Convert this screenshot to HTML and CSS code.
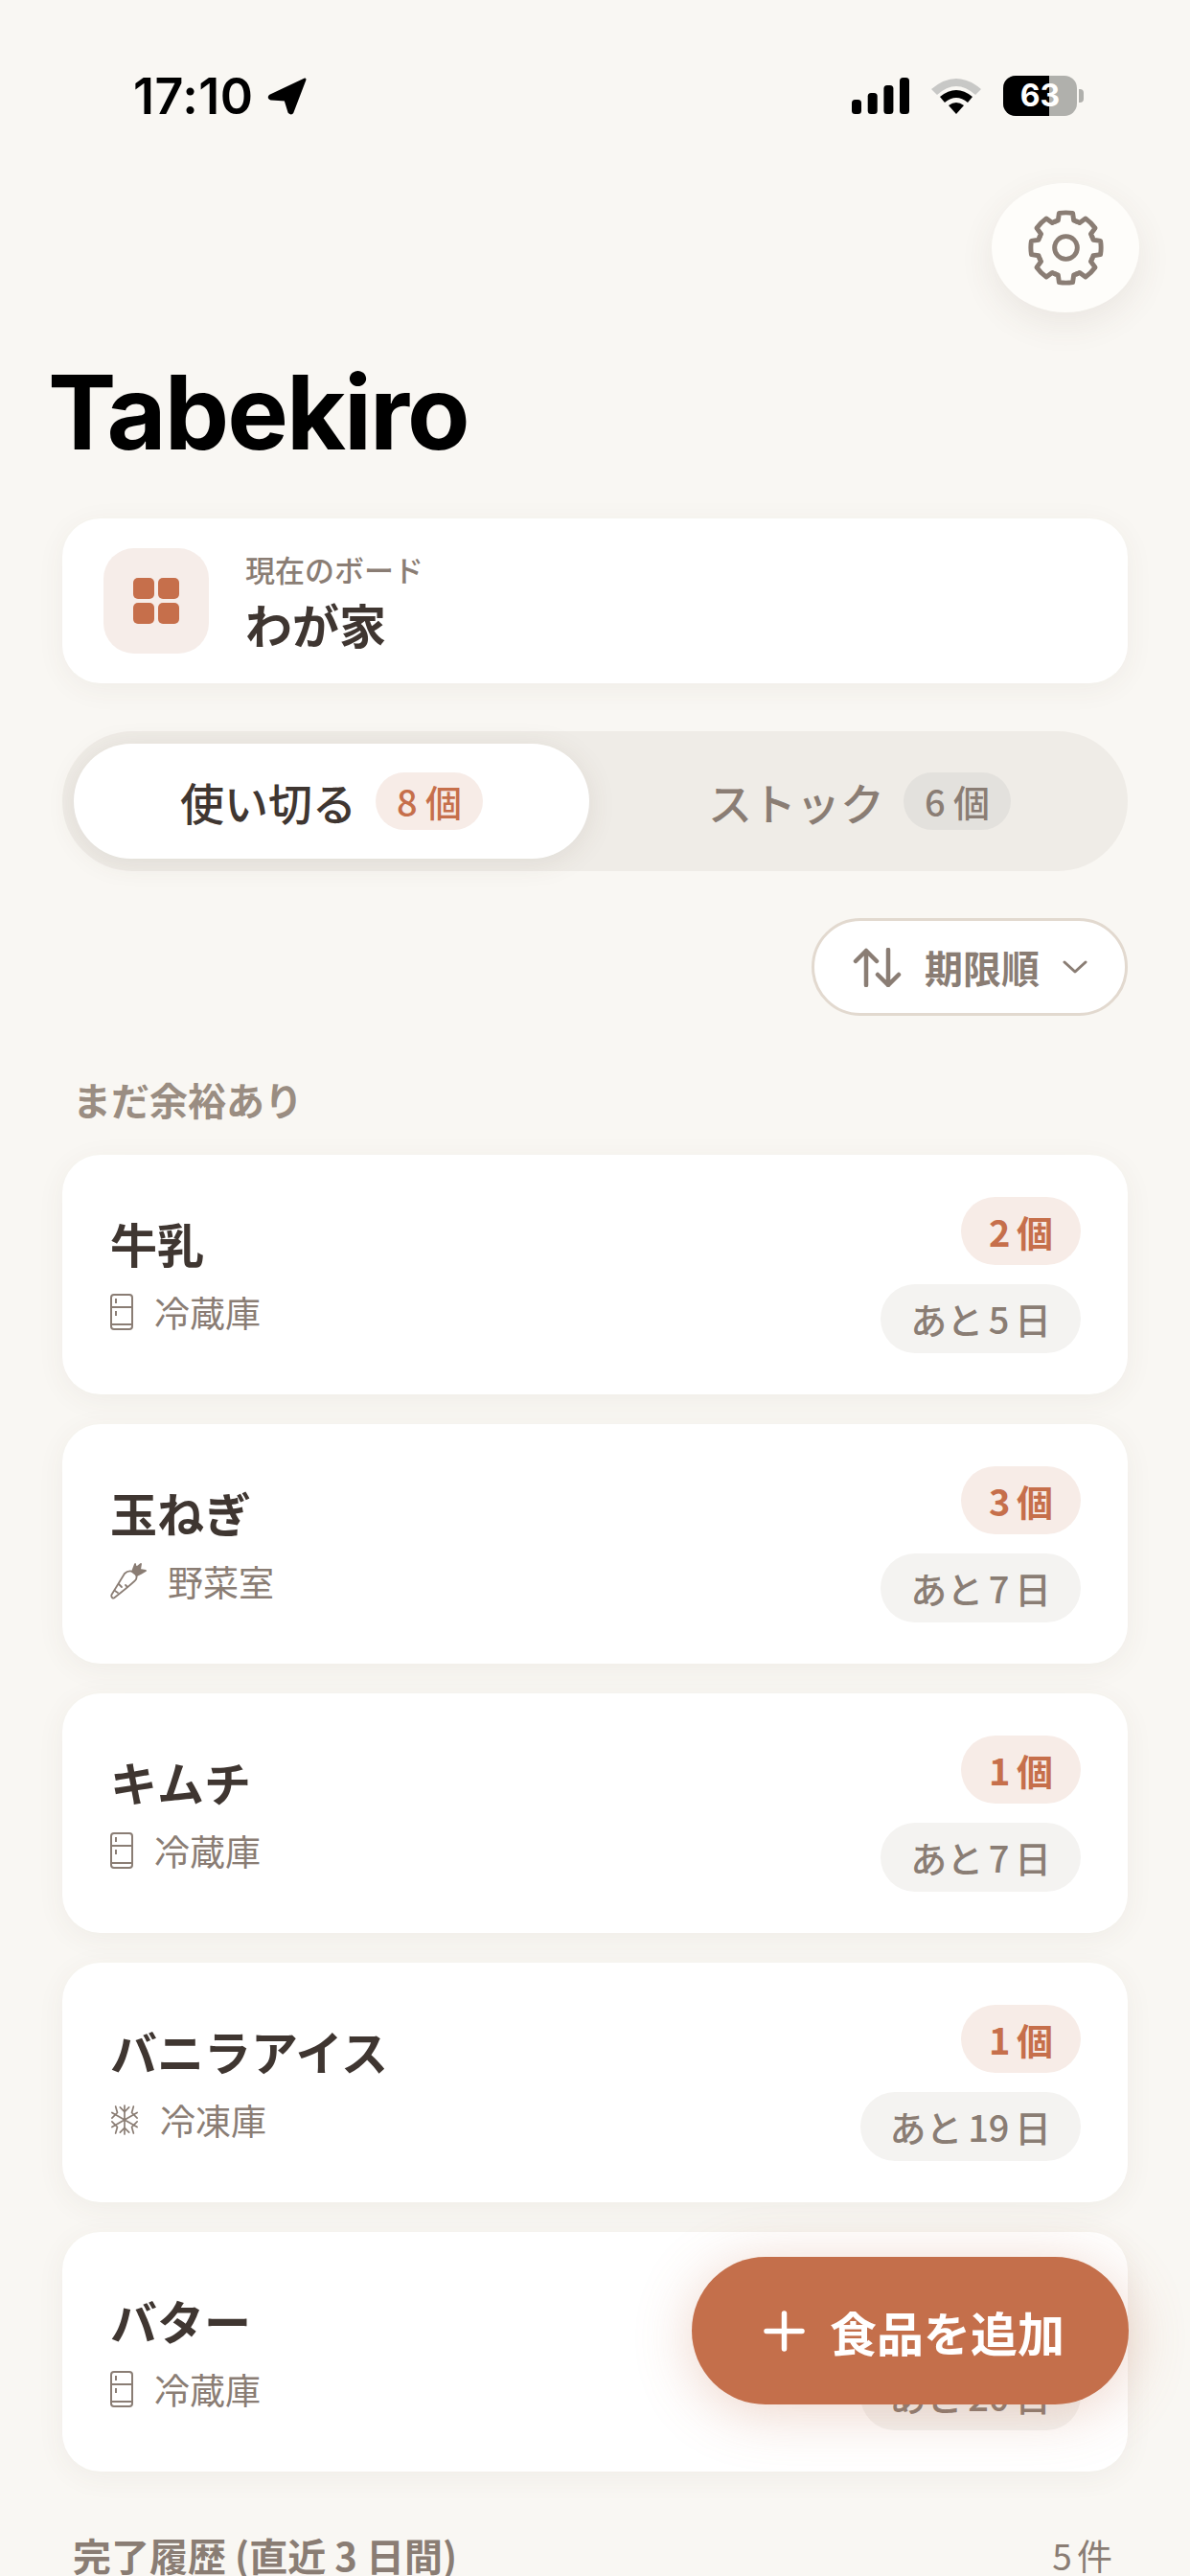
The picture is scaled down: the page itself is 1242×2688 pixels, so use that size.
FILE: index.html
```html
<!DOCTYPE html>
<html lang="ja">
<head>
    <meta charset="UTF-8">
    <title>Tabekiro</title>
    <link rel="stylesheet" href="styles.css">
</head>
<body>
    <div class="phone">
        <div class="status-bar">
            <div class="status-time">
                <span>17:10</span>
                <svg class="loc-icon" viewBox="0 0 41 39"><path d="M39 2 L3 19 Q1 21 4 22 L19 23 L23 36 Q25 38 26 36 Z" fill="#000" stroke="#000" stroke-width="3" stroke-linejoin="round"/></svg>
            </div>
            <div class="status-icons">
                <svg class="signal-icon" viewBox="0 0 60 38">
                    <rect x="0" y="23" width="10" height="15" rx="3.500"/>
                    <rect x="16.700" y="16" width="10" height="22" rx="3.500"/>
                    <rect x="33.400" y="8" width="10" height="30" rx="3.500"/>
                    <rect x="50" y="0" width="10" height="38" rx="3.500"/>
                </svg>
                <svg class="wifi-icon" viewBox="0 0 52 37">
                    <path d="M26 37 L18 28 Q26 22 34 28 Z" fill="#000"/>
                    <path d="M9 19 Q26 5 43 19 L38 25 Q26 15 14 25 Z" fill="#000"/>
                    <path d="M0 11 Q26 -11 52 11 L46 17 Q26 -1 6 17 Z" fill="#c8c8c6"/>
                </svg>
                <div class="battery">
                    <div class="battery-fill"></div>
                    <span class="battery-num">63</span>
                    <div class="battery-cap"></div>
                </div>
            </div>
        </div>

        <div class="top-row">
            <button class="settings-btn">
                <svg viewBox="0 0 80 80" fill="none" stroke="#8a7d74" stroke-width="5" stroke-linecap="round" stroke-linejoin="round">
                    <defs>
                        <path id="gear-tooth" d="M28.500 12.300 Q30 11.600 31.700 11.200 L32.800 3.500 Q40 2.300 47.200 3.500 L48.300 11.200 Q50 11.600 51.500 12.300"/>
                    </defs>
                    <use href="#gear-tooth"/>
                    <use href="#gear-tooth" transform="rotate(45 40 40)"/>
                    <use href="#gear-tooth" transform="rotate(90 40 40)"/>
                    <use href="#gear-tooth" transform="rotate(135 40 40)"/>
                    <use href="#gear-tooth" transform="rotate(180 40 40)"/>
                    <use href="#gear-tooth" transform="rotate(225 40 40)"/>
                    <use href="#gear-tooth" transform="rotate(270 40 40)"/>
                    <use href="#gear-tooth" transform="rotate(315 40 40)"/>
                    <circle cx="40" cy="40" r="12"/>
                </svg>
            </button>
        </div>

        <h1 class="app-title">Tabekiro</h1>

        <main class="content">
            <section class="board-card">
                <div class="board-icon">
                    <svg viewBox="0 0 48 48"><rect x="0" y="0" width="22" height="22" rx="5"/><rect x="26" y="0" width="22" height="22" rx="5"/><rect x="0" y="26" width="22" height="22" rx="5"/><rect x="26" y="26" width="22" height="22" rx="5"/></svg>
                </div>
                <div class="board-text">
                    <div class="board-label">現在のボード</div>
                    <div class="board-name">わが家</div>
                </div>
            </section>

            <div class="tabs">
                <div class="tab tab-active">使い切る <span class="tab-count">8 個</span></div>
                <div class="tab tab-stock">ストック <span class="tab-count">6 個</span></div>
            </div>

            <div class="sort-row">
                <button class="sort-btn">
                    <svg class="sort-icon" viewBox="0 0 51 41" fill="none" stroke="#8a7d74" stroke-width="4.500" stroke-linecap="round" stroke-linejoin="round"><path d="M14 39V3M3 14L14 3l11 11M37 2v37M26 28l11 11 11-11"/></svg>
                    <span>期限順</span>
                    <svg class="chev-icon" viewBox="0 0 26 14" fill="none" stroke="#8a7d74" stroke-width="3" stroke-linecap="round" stroke-linejoin="round"><path d="M2 2l11 10L24 2"/></svg>
                </button>
            </div>

            <h2 class="section-title">まだ余裕あり</h2>

            <div class="item-list">
                <article class="item">
                    <div class="item-main">
                        <div class="item-name">牛乳</div>
                        <div class="item-place">
                            <svg class="place-icon fridge" viewBox="0 0 24 38"><use href="#fridge"/></svg>
                            <span>冷蔵庫</span>
                        </div>
                    </div>
                    <div class="item-side">
                        <span class="qty">2 個</span>
                        <span class="left">あと 5 日</span>
                    </div>
                </article>
                <article class="item">
                    <div class="item-main">
                        <div class="item-name">玉ねぎ</div>
                        <div class="item-place">
                            <svg class="place-icon carrot" viewBox="0 0 38 38" fill="none" stroke="#8a7d74" stroke-width="1.800" stroke-linecap="round" stroke-linejoin="round">
                                <path d="M2 36 Q0.800 35 1.500 33 L15 11 Q19 7 24 9 Q29 12 27 17 Q25 20 4 36.500 Q3 37 2 36Z"/>
                                <path d="M9 22l3 3M5 29l3 2M18 25l-2-2"/>
                                <path d="M23 9L28 13 32 11 37 8 31 7 32 1 27 5 26 1Z" fill="#8a7d74"/>
                            </svg>
                            <span>野菜室</span>
                        </div>
                    </div>
                    <div class="item-side">
                        <span class="qty">3 個</span>
                        <span class="left">あと 7 日</span>
                    </div>
                </article>
                <article class="item">
                    <div class="item-main">
                        <div class="item-name">キムチ</div>
                        <div class="item-place">
                            <svg class="place-icon fridge" viewBox="0 0 24 38"><use href="#fridge"/></svg>
                            <span>冷蔵庫</span>
                        </div>
                    </div>
                    <div class="item-side">
                        <span class="qty">1 個</span>
                        <span class="left">あと 7 日</span>
                    </div>
                </article>
                <article class="item">
                    <div class="item-main">
                        <div class="item-name">バニラアイス</div>
                        <div class="item-place">
                            <svg class="place-icon snow" viewBox="0 0 32 34" fill="none" stroke="#8a7d74" stroke-width="1.800" stroke-linecap="round" stroke-linejoin="round">
                                <path d="M16 1v32M2 9l28 16M30 9L2 25"/>
                                <path d="M11 3l5 5 5-5M11 31l5-5 5 5M2 15l6-6-2-7M30 15l-6-6 2-7M2 19l6 6-2 7M30 19l-6 6 2 7"/>
                            </svg>
                            <span>冷凍庫</span>
                        </div>
                    </div>
                    <div class="item-side">
                        <span class="qty">1 個</span>
                        <span class="left">あと 19 日</span>
                    </div>
                </article>
                <article class="item">
                    <div class="item-main">
                        <div class="item-name">バター</div>
                        <div class="item-place">
                            <svg class="place-icon fridge" viewBox="0 0 24 38"><use href="#fridge"/></svg>
                            <span>冷蔵庫</span>
                        </div>
                    </div>
                    <div class="item-side">
                        <span class="qty">2 個</span>
                        <span class="left">あと 20 日</span>
                    </div>
                </article>
            </div>

            <div class="history-row">
                <h2 class="section-title history-title">完了履歴 (直近 3 日間)</h2>
                <span class="history-count">5 件</span>
            </div>
        </main>

        <button class="add-btn">
            <svg viewBox="0 0 43 43" fill="none" stroke="#fff" stroke-width="5.500" stroke-linecap="round"><path d="M21.500 3v37M3 21.500h37"/></svg>
            <span>食品を追加</span>
        </button>
    </div>

    <svg class="sprites" aria-hidden="true">
        <symbol id="fridge" viewBox="0 0 24 38">
            <g fill="none" stroke="#8a7d74" stroke-width="2">
                <rect x="1" y="1" width="22" height="36" rx="3"/>
                <path d="M1 14h22M1 32h22M6 5v5M6 18v5"/>
            </g>
        </symbol>
    </svg>
</body>
</html>
```

FILE: styles.css
```css
* {
    box-sizing: border-box;
}

html, body {
    margin: 0;
    padding: 0;
}

body {
    font-family: "Noto Sans CJK JP", sans-serif;
    background-color: #f9f7f3;
    color: #3f3631;
}

button {
    font-family: inherit;
    border: none;
    padding: 0;
}

h1, h2 {
    margin: 0;
}

.sprites {
    display: none;
}

.phone {
    position: relative;
    width: 1242px;
    height: 2688px;
    overflow: hidden;
}

/* status bar */
.status-bar {
    height: 191px;
    padding: 0 118px 0 139px;
    display: flex;
    align-items: flex-start;
    justify-content: space-between;
    font-family: Inter, sans-serif;
}

.status-time {
    display: flex;
    align-items: center;
    gap: 14px;
    margin-top: 78px;
    height: 44px;
    font-size: 52px;
    font-weight: 600;
    color: #000;
    letter-spacing: 0.5px;
}

.loc-icon {
    width: 41px;
    height: 39px;
}

.status-icons {
    display: flex;
    align-items: center;
    gap: 23px;
    margin-top: 78px;
    height: 44px;
}

.signal-icon {
    width: 60px;
    height: 38px;
}

.wifi-icon {
    width: 52px;
    height: 37px;
}

.battery {
    position: relative;
    width: 77px;
    height: 42px;
    border-radius: 13px;
    background-color: #b0b0ac;
    text-align: center;
}

.battery-fill {
    position: absolute;
    left: 0;
    top: 0;
    width: 48px;
    height: 42px;
    background-color: #000;
    border-radius: 13px 0 0 13px;
}

.battery-num {
    position: relative;
    font-size: 32px;
    font-weight: 700;
    line-height: 42px;
    color: #fff;
}

.battery-cap {
    position: absolute;
    right: -7px;
    top: 14px;
    width: 5px;
    height: 14px;
    background-color: #b0b0ac;
    border-radius: 0 4px 4px 0;
}

/* settings */
.top-row {
    display: flex;
    justify-content: flex-end;
    padding-right: 53px;
}

.settings-btn {
    width: 154px;
    height: 135px;
    border-radius: 50%;
    background-color: #fefdfa;
    box-shadow: 0 12px 36px rgba(90, 70, 50, 0.09);
    display: flex;
    align-items: center;
    justify-content: center;
}

.settings-btn svg {
    width: 79px;
    height: 79px;
}

.app-title {
    margin: 44px 0 0 50px;
    font-family: Inter, sans-serif;
    font-size: 107px;
    line-height: 120px;
    font-weight: 700;
    color: #000;
    letter-spacing: -2px;
}

.content {
    padding: 51px 65px 0;
}

/* board card */
.board-card {
    height: 172px;
    padding: 0 43px;
    display: flex;
    align-items: center;
    gap: 38px;
    background-color: #fff;
    border-radius: 40px;
    box-shadow: 0 6px 30px rgba(90, 70, 50, 0.06);
}

.board-icon {
    width: 110px;
    height: 110px;
    border-radius: 32px;
    background-color: #f6ede9;
    display: flex;
    align-items: center;
    justify-content: center;
}

.board-icon svg {
    width: 48px;
    height: 48px;
    fill: #c66f4b;
}

.board-label {
    font-size: 31px;
    line-height: 40px;
    color: #8a7d74;
    font-weight: 500;
}

.board-name {
    margin-top: 8px;
    font-size: 49px;
    line-height: 58px;
    font-weight: 700;
}

/* tabs */
.tabs {
    margin-top: 50px;
    height: 146px;
    padding: 13px 12px;
    display: flex;
    background-color: #efece7;
    border-radius: 73px;
}

.tab {
    flex: 1;
    display: flex;
    align-items: center;
    justify-content: center;
    gap: 20px;
    border-radius: 60px;
    font-size: 46px;
    font-weight: 500;
    color: #8a7d74;
}

.tab-active {
    flex: none;
    width: 538px;
    background-color: #fff;
    color: #3f3631;
    box-shadow: 0 4px 30px rgba(90, 70, 50, 0.1);
}

.tab-stock {
    padding-left: 14px;
}

.tab-count {
    width: 112px;
    height: 60px;
    border-radius: 30px;
    background-color: #e3e1dd;
    font-size: 38px;
    font-weight: 500;
    line-height: 60px;
    text-align: center;
}

.tab-active .tab-count {
    background-color: #f7ece7;
    color: #c66f4b;
}

/* sort */
.sort-row {
    display: flex;
    justify-content: flex-end;
    margin-top: 49px;
}

.sort-btn {
    height: 102px;
    padding: 0 39px 0 40px;
    display: flex;
    align-items: center;
    gap: 24px;
    background-color: #fff;
    border: 3px solid #e2d9cf;
    border-radius: 51px;
    font-size: 40px;
    font-weight: 700;
    color: #8a7d74;
}

.sort-icon {
    width: 51px;
    height: 41px;
}

.chev-icon {
    width: 26px;
    height: 14px;
}

.section-title {
    font-size: 40px;
    line-height: 50px;
    font-weight: 700;
    color: #9a8d82;
    padding-left: 11px;
    margin-top: 62px;
}

/* item cards */
.item-list {
    display: flex;
    flex-direction: column;
    gap: 31px;
    margin-top: 33px;
}

.item {
    height: 250px;
    padding: 0 49px 0 50px;
    display: flex;
    align-items: center;
    justify-content: space-between;
    background-color: #fff;
    border-radius: 40px;
    box-shadow: 0 6px 30px rgba(90, 70, 50, 0.06);
}

.item-main {
    padding-top: 1px;
}

.item-name {
    font-size: 49px;
    line-height: 60px;
    font-weight: 700;
}

.item-place {
    display: flex;
    align-items: center;
    gap: 22px;
    margin-top: 17px;
    font-size: 37px;
    line-height: 50px;
    color: #8a7d74;
}

.place-icon {
    flex-shrink: 0;
}

.fridge {
    width: 24px;
    height: 38px;
}

.carrot {
    width: 38px;
    height: 38px;
}

.snow {
    width: 30px;
    height: 32px;
}

.item-side {
    display: flex;
    flex-direction: column;
    align-items: flex-end;
    gap: 20px;
}

.qty {
    height: 71px;
    padding: 0 29px;
    border-radius: 36px;
    background-color: #f7ece7;
    color: #c66f4b;
    font-size: 38px;
    line-height: 71px;
    font-weight: 700;
    word-spacing: -2px;
}

.left {
    height: 72px;
    padding: 0 31px;
    border-radius: 36px;
    background-color: #f4f3f1;
    color: #8a7d74;
    font-size: 38px;
    line-height: 72px;
    font-weight: 500;
    word-spacing: -3px;
}

.history-row {
    display: flex;
    align-items: center;
    justify-content: space-between;
    margin-top: 65px;
    padding-right: 16px;
}

.history-title {
    margin-top: 0;
    line-height: 44px;
    color: #8a7d74;
}

.history-count {
    font-size: 37px;
    line-height: 44px;
    color: #8a7d74;
    word-spacing: -3px;
}

/* floating add button */
.add-btn {
    position: absolute;
    left: 722px;
    top: 2355px;
    width: 456px;
    height: 154px;
    padding-left: 8px;
    display: flex;
    align-items: center;
    justify-content: center;
    gap: 26px;
    border-radius: 77px;
    background-color: #c46f4b;
    box-shadow: 0 8px 60px rgba(196, 111, 75, 0.3);
    color: #fff;
    font-size: 49px;
    font-weight: 700;
}

.add-btn svg {
    width: 43px;
    height: 43px;
}
```
